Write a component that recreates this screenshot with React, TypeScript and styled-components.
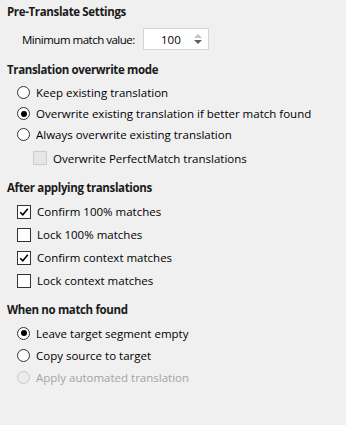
import React, { useState } from 'react';
import styled, { createGlobalStyle } from 'styled-components';

const GlobalStyle = createGlobalStyle`
  html, body {
    margin: 0;
    padding: 0;
    background: #f0f0f0;
  }
  body {
    font-family: 'Open Sans', 'Noto Sans', sans-serif;
    font-size: 11.5px;
    color: #000;
  }
`;

const Page = styled.div`
  width: 346px;
  height: 425px;
  box-sizing: border-box;
  padding: 2px 7px 0 7px;
  background: #f0f0f0;
`;

const Section = styled.section<{ $top?: number }>`
  margin-top: ${(p) => p.$top ?? 0}px;
`;

const Heading = styled.div`
  height: 20px;
  line-height: 20px;
  font-weight: 700;
  font-size: 11.5px;
  color: #1a1a1a;
  letter-spacing: -0.35px;
`;

const FieldRow = styled.div`
  display: flex;
  align-items: center;
  margin-top: 6px;
  padding-left: 15px;
  height: 22px;
  gap: 9px;
`;

const Label = styled.span<{ $disabled?: boolean }>`
  color: ${(p) => (p.$disabled ? '#a3a3a3' : '#000')};
  white-space: nowrap;
`;

const FieldLabel = styled(Label)`
  width: 112px;
  letter-spacing: -0.5px;
`;

const SpinBox = styled.div`
  display: flex;
  align-items: center;
  width: 66px;
  height: 22px;
  box-sizing: border-box;
  border: 1px solid #d4d4d4;
  background: #fff;
  padding: 0 6px 0 17px;
`;

const SpinValue = styled.span`
  flex: 1;
`;

const SpinArrows = styled.div`
  display: flex;
  flex-direction: column;
  gap: 2px;
`;

const Arrow = styled.div<{ $down?: boolean }>`
  width: 0;
  height: 0;
  border-left: 4px solid transparent;
  border-right: 4px solid transparent;
  ${(p) =>
    p.$down
      ? 'border-top: 4px solid #606060;'
      : 'border-bottom: 4px solid #c2c2c2;'}
`;

const List = styled.div<{ $top: number }>`
  display: flex;
  flex-direction: column;
  margin-top: ${(p) => p.$top}px;
`;

const OptionRow = styled.label<{ $indent: number; $height: number }>`
  display: flex;
  align-items: center;
  height: ${(p) => p.$height}px;
  padding-left: ${(p) => p.$indent}px;
  gap: 6px;
`;

const RadioCircle = styled.span<{ $checked?: boolean; $disabled?: boolean }>`
  position: relative;
  width: 13px;
  height: 13px;
  box-sizing: border-box;
  border-radius: 50%;
  border: 1px solid ${(p) => (p.$disabled ? '#c8c8c8' : '#333')};
  background: ${(p) => (p.$disabled ? '#ececec' : '#fff')};
  flex-shrink: 0;

  &::after {
    content: '';
    display: ${(p) => (p.$checked ? 'block' : 'none')};
    position: absolute;
    left: 50%;
    top: 50%;
    width: 6px;
    height: 6px;
    border-radius: 50%;
    background: #000;
    transform: translate(-50%, -50%);
  }
`;

const CheckBox = styled.span<{ $disabled?: boolean }>`
  display: flex;
  align-items: center;
  justify-content: center;
  width: 14px;
  height: 14px;
  box-sizing: border-box;
  border: 1px solid ${(p) => (p.$disabled ? '#cccccc' : '#333')};
  background: ${(p) => (p.$disabled ? '#e6e6e6' : '#fff')};
  flex-shrink: 0;
`;

const Radio: React.FC<{
  label: string;
  checked?: boolean;
  disabled?: boolean;
  height?: number;
  onSelect?: () => void;
}> = ({ label, checked, disabled, height = 21, onSelect }) => (
  <OptionRow $indent={10} $height={height} onClick={() => !disabled && onSelect && onSelect()}>
    <RadioCircle $checked={checked} $disabled={disabled} />
    <Label $disabled={disabled}>{label}</Label>
  </OptionRow>
);

const Check: React.FC<{
  label: string;
  checked?: boolean;
  disabled?: boolean;
  indent?: number;
  height?: number;
  onToggle?: () => void;
}> = ({ label, checked, disabled, indent = 10, height = 23, onToggle }) => (
  <OptionRow $indent={indent} $height={height} onClick={() => !disabled && onToggle && onToggle()}>
    <CheckBox $disabled={disabled}>
      {checked && (
        <svg width="10" height="10" viewBox="0 0 10 10">
          <path d="M1.2 5.2 L3.8 7.8 L8.8 1.8" fill="none" stroke="#000" strokeWidth="1.6" />
        </svg>
      )}
    </CheckBox>
    <Label>{label}</Label>
  </OptionRow>
);

const App: React.FC = () => {
  const [overwrite, setOverwrite] = useState(1);
  const [noMatch, setNoMatch] = useState(0);
  const [checks, setChecks] = useState([true, false, true, false]);

  const toggle = (i: number) => setChecks((c) => c.map((v, j) => (j === i ? !v : v)));

  const overwriteOptions = [
    'Keep existing translation',
    'Overwrite existing translation if better match found',
    'Always overwrite existing translation',
  ];
  const applyOptions = [
    'Confirm 100% matches',
    'Lock 100% matches',
    'Confirm context matches',
    'Lock context matches',
  ];

  return (
    <Page>
      <GlobalStyle />
      <Section>
        <Heading>Pre-Translate Settings</Heading>
        <FieldRow>
          <FieldLabel>Minimum match value:</FieldLabel>
          <SpinBox>
            <SpinValue>100</SpinValue>
            <SpinArrows>
              <Arrow />
              <Arrow $down />
            </SpinArrows>
          </SpinBox>
        </FieldRow>
      </Section>

      <Section $top={10}>
        <Heading>Translation overwrite mode</Heading>
        <List $top={2}>
          {overwriteOptions.map((o, i) => (
            <Radio key={o} label={o} checked={overwrite === i} onSelect={() => setOverwrite(i)} />
          ))}
          <Check label="Overwrite PerfectMatch translations" disabled indent={26} height={26} />
        </List>
      </Section>

      <Section $top={7}>
        <Heading>After applying translations</Heading>
        <List $top={2}>
          {applyOptions.map((o, i) => (
            <Check key={o} label={o} checked={checks[i]} onToggle={() => toggle(i)} />
          ))}
        </List>
      </Section>

      <Section $top={8}>
        <Heading>When no match found</Heading>
        <List $top={2}>
          <Radio label="Leave target segment empty" height={22} checked={noMatch === 0} onSelect={() => setNoMatch(0)} />
          <Radio label="Copy source to target" height={22} checked={noMatch === 1} onSelect={() => setNoMatch(1)} />
          <Radio label="Apply automated translation" height={22} disabled />
        </List>
      </Section>
    </Page>
  );
};

export default App;
